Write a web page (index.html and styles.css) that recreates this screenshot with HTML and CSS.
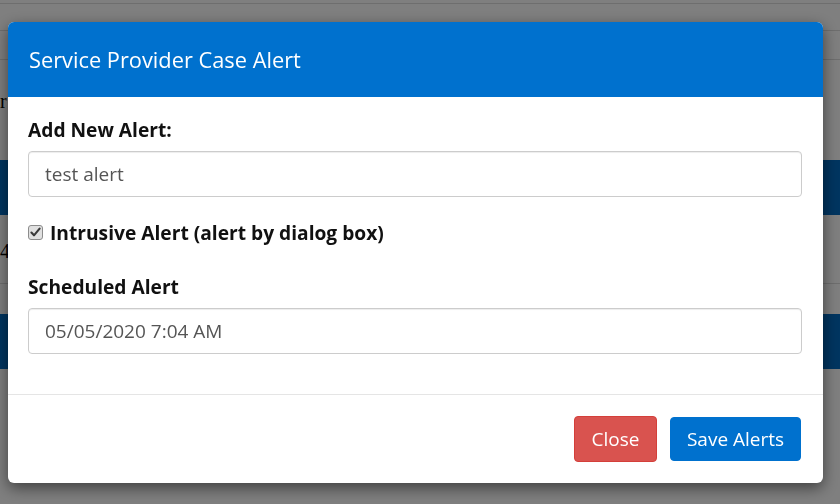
FILE: index.html
```html
<!DOCTYPE html>
<html lang="en">
<head>
<meta charset="utf-8">
<title>Service Provider Case Alert</title>
<link rel="stylesheet" href="styles.css">
</head>
<body>
<div class="page">
  <div class="pg-row pg-r1"></div>
  <div class="pg-row pg-r2"></div>
  <div class="pg-row pg-r3"></div>
  <div class="pg-row pg-r4"><span class="pg-text">r</span></div>
  <div class="pg-band"></div>
  <div class="pg-row pg-r6"><span class="pg-text">4</span></div>
  <div class="pg-row pg-r7"></div>
  <div class="pg-band"></div>
</div>

<div class="overlay">
  <div class="modal">
    <div class="modal-header">
      <h4 class="modal-title">Service Provider Case Alert</h4>
    </div>
    <div class="modal-body">
      <label class="field-label">Add New Alert:</label>
      <div class="input">test alert</div>
      <div class="check-row">
        <span class="checkbox">
          <svg width="15" height="15" viewBox="0 0 15 15">
            <rect x="0.5" y="0.5" width="14" height="14" rx="2.5" fill="#e0e0e0" stroke="#8c8c8c"/>
            <path d="M3.4 7.6 L6 10.3 L11.6 3.6" fill="none" stroke="#3a3a3a" stroke-width="2.1" stroke-linecap="round" stroke-linejoin="round"/>
          </svg>
        </span>
        <span class="check-label">Intrusive Alert (alert by dialog box)</span>
      </div>
      <label class="field-label second">Scheduled Alert</label>
      <div class="input">05/05/2020 7:04 AM</div>
    </div>
    <div class="modal-footer">
      <button class="btn btn-danger">Close</button>
      <button class="btn btn-primary">Save Alerts</button>
    </div>
  </div>
</div>
</body>
</html>
```

FILE: styles.css
```css
* { box-sizing: border-box; }

html, body {
  margin: 0;
  padding: 0;
  width: 840px;
  height: 504px;
  overflow: hidden;
  background: #ffffff;
  font-family: "Open Sans", "Noto Sans", sans-serif;
}

/* underlying page (mostly hidden by the modal) */
.page {
  width: 840px;
}
.pg-row {
  border-bottom: 1px solid #dcdcdc;
}
.pg-r1 { height: 4px; }
.pg-r2 { height: 27px; }
.pg-r3 { height: 29px; }
.pg-r4 { height: 100px; border-bottom: none; }
.pg-band {
  height: 55px;
  background: #006ac0;
}
.pg-r6 { height: 69px; }
.pg-r7 { height: 30px; border-bottom: none; }
.pg-text {
  display: block;
  font-family: "Liberation Serif", serif;
  font-size: 20px;
  line-height: 24px;
  color: #000;
  padding-top: 29px;
}
.pg-r6 .pg-text {
  padding-top: 24px;
}

/* overlay + modal */
.overlay {
  position: fixed;
  inset: 0;
  background: rgba(0, 0, 0, 0.5);
}
.modal {
  margin: 22px 0 0 8px;
  width: 815px;
  background: #fff;
  border-radius: 6px;
  overflow: hidden;
  box-shadow: 0 5px 15px rgba(0, 0, 0, 0.5);
}
.modal-header {
  height: 75px;
  background: #0071ce;
  display: flex;
  align-items: center;
  padding-left: 21px;
}
.modal-title {
  margin: 0;
  color: #fff;
  font-weight: 400;
  font-size: 21.8px;
  line-height: 28px;
}
.modal-body {
  padding: 19px 21px 40px 20px;
  border-bottom: 1px solid #e5e5e5;
  color: #111;
}
.field-label {
  display: block;
  font-weight: 700;
  font-size: 19.2px;
  line-height: 27px;
  margin-bottom: 8px;
}
.field-label.second {
  margin-top: 27px;
}
.input {
  height: 46px;
  border: 1px solid #cccccc;
  border-radius: 4px;
  padding: 0 16px;
  display: flex;
  align-items: center;
  font-size: 19px;
  color: #555;
  box-shadow: inset 0 1px 1px rgba(0, 0, 0, 0.075);
}
.check-row {
  margin-top: 22px;
  display: flex;
  align-items: center;
  height: 27px;
}
.checkbox {
  width: 15px;
  height: 15px;
  margin-right: 7px;
  display: flex;
}
.check-label {
  font-weight: 700;
  font-size: 19.2px;
  line-height: 27px;
}
.modal-footer {
  height: 88px;
  display: flex;
  align-items: center;
  justify-content: flex-end;
  gap: 13px;
  padding-right: 22px;
}
.btn {
  font-family: "Open Sans", "Noto Sans", sans-serif;
  font-size: 19px;
  color: #fff;
  border-radius: 4px;
  padding: 0;
  cursor: pointer;
}
.btn-danger {
  width: 83px;
  height: 46px;
  background: #d9534f;
  border: 1px solid #d43f3a;
}
.btn-primary {
  width: 131px;
  height: 44px;
  background: #0071ce;
  border: 1px solid #0071ce;
}
```
